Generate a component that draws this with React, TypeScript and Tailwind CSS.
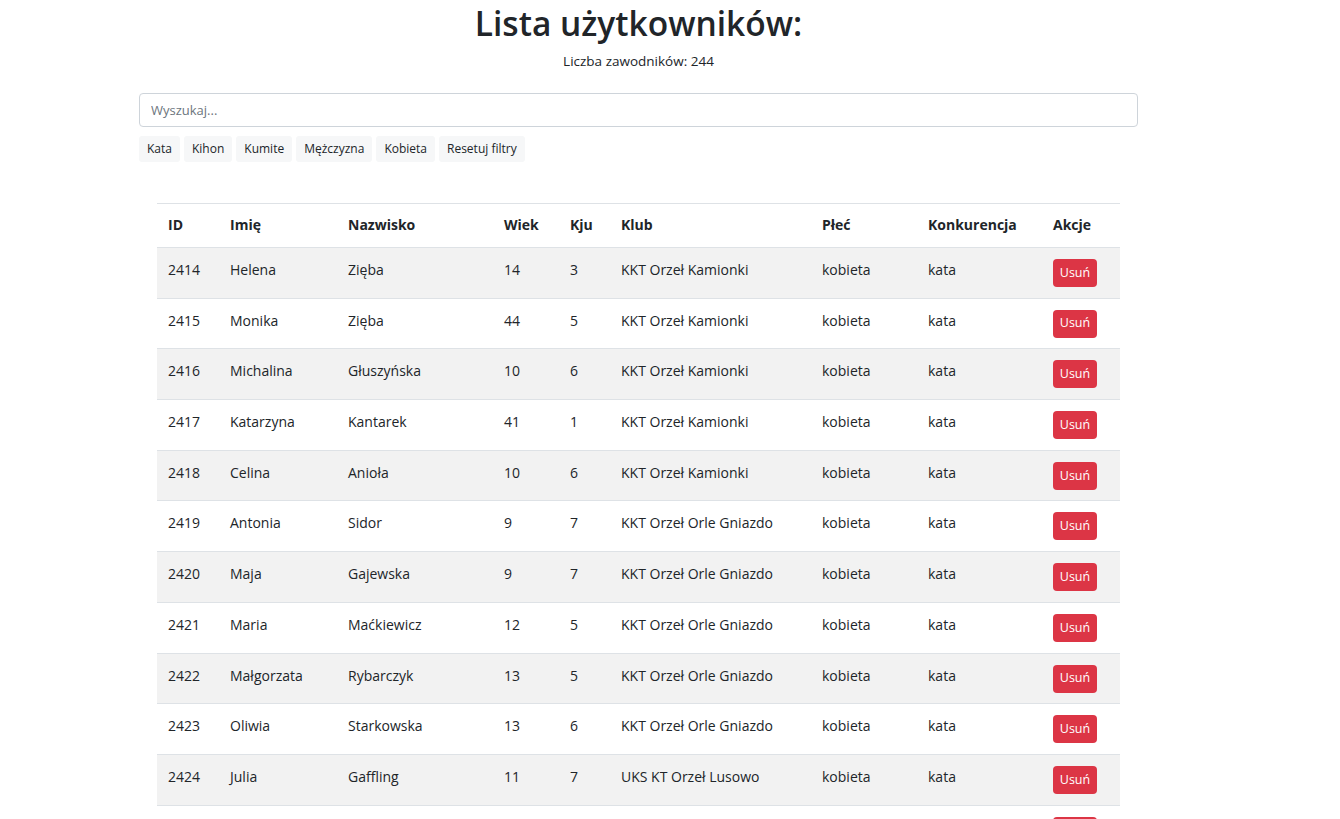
const rows = [
  {id: 2414, name: "Helena", surname: "Zięba", age: 14, kyu: 3, club: "KKT Orzeł Kamionki"},
  {id: 2415, name: "Monika", surname: "Zięba", age: 44, kyu: 5, club: "KKT Orzeł Kamionki"},
  {id: 2416, name: "Michalina", surname: "Głuszyńska", age: 10, kyu: 6, club: "KKT Orzeł Kamionki"},
  {id: 2417, name: "Katarzyna", surname: "Kantarek", age: 41, kyu: 1, club: "KKT Orzeł Kamionki"},
  {id: 2418, name: "Celina", surname: "Anioła", age: 10, kyu: 6, club: "KKT Orzeł Kamionki"},
  {id: 2419, name: "Antonia", surname: "Sidor", age: 9, kyu: 7, club: "KKT Orzeł Orle Gniazdo"},
  {id: 2420, name: "Maja", surname: "Gajewska", age: 9, kyu: 7, club: "KKT Orzeł Orle Gniazdo"},
  {id: 2421, name: "Maria", surname: "Maćkiewicz", age: 12, kyu: 5, club: "KKT Orzeł Orle Gniazdo"},
  {id: 2422, name: "Małgorzata", surname: "Rybarczyk", age: 13, kyu: 5, club: "KKT Orzeł Orle Gniazdo"},
  {id: 2423, name: "Oliwia", surname: "Starkowska", age: 13, kyu: 6, club: "KKT Orzeł Orle Gniazdo"},
  {id: 2424, name: "Julia", surname: "Gaffling", age: 11, kyu: 7, club: "UKS KT Orzeł Lusowo"},
  {id: 2425, name: "Zofia", surname: "Nowak", age: 12, kyu: 6, club: "UKS KT Orzeł Lusowo"},
];

const filters = ["Kata", "Kihon", "Kumite", "Mężczyzna", "Kobieta", "Resetuj filtry"];

const cols = [
  {label: "ID", w: "w-[62px]"},
  {label: "Imię", w: "w-[118px]"},
  {label: "Nazwisko", w: "w-[156px]"},
  {label: "Wiek", w: "w-[66px]"},
  {label: "Kju", w: "w-[51px]"},
  {label: "Klub", w: "w-[201px]"},
  {label: "Płeć", w: "w-[106px]"},
  {label: "Konkurencja", w: "w-[125px]"},
  {label: "Akcje", w: "w-[78px]"},
];

const App: React.FC = () => {
  return (
    <div className="w-[1277px] bg-white text-[#212529] font-['Open_Sans',sans-serif] text-[14px]">
      <h1 className="text-center text-[33.5px] font-semibold leading-[46px]">Lista użytkowników:</h1>
      <p className="text-center text-[13.5px] leading-[20px] mt-[5px]">Liczba zawodników: 244</p>

      <div className="w-[999px] mx-auto mt-[22px]">
        <input
          type="text"
          placeholder="Wyszukaj..."
          className="w-full h-[34px] px-[11px] border border-[#ced4da] rounded-[4px] text-[13px] placeholder:text-[#6c757d] outline-none"
        />
        <div className="flex gap-[4px] mt-[9px]">
          {filters.map((f) => (
            <button
              key={f}
              className="h-[26px] px-[8px] bg-[#f6f7f8] rounded-[3px] text-[12px] text-[#212529]"
            >
              {f}
            </button>
          ))}
        </div>
      </div>

      <table className="mx-auto mt-[41px] w-[963px] border-collapse table-fixed">
        <thead>
          <tr className="border-t border-[#dee2e6] border-b border-b-[#dee2e6]">
            {cols.map((c) => (
              <th key={c.label} className={`${c.w} h-[44px] px-[11px] pb-[2px] text-left font-bold`}>
                {c.label}
              </th>
            ))}
          </tr>
        </thead>
        <tbody>
          {rows.map((r, i) => (
            <tr key={r.id} className={`border-b border-[#dee2e6] align-top leading-[21px] ${i % 2 === 0 ? "bg-[#f2f2f2]" : "bg-white"}`}>
              <td className="h-[50.7px] px-[11px] pt-[11px]">{r.id}</td>
              <td className="px-[11px] pt-[11px]">{r.name}</td>
              <td className="px-[11px] pt-[11px]">{r.surname}</td>
              <td className="px-[11px] pt-[11px]">{r.age}</td>
              <td className="px-[11px] pt-[11px]">{r.kyu}</td>
              <td className="px-[11px] pt-[11px] whitespace-nowrap">{r.club}</td>
              <td className="px-[11px] pt-[11px]">kobieta</td>
              <td className="px-[11px] pt-[11px]">kata</td>
              <td className="px-[11px] pt-[11px]">
                <button className="block h-[28px] w-[44px] bg-[#dc3545] text-white text-[12.5px] leading-none rounded-[4px]">
                  Usuń
                </button>
              </td>
            </tr>
          ))}
        </tbody>
      </table>
    </div>
  );
};

export default App;
